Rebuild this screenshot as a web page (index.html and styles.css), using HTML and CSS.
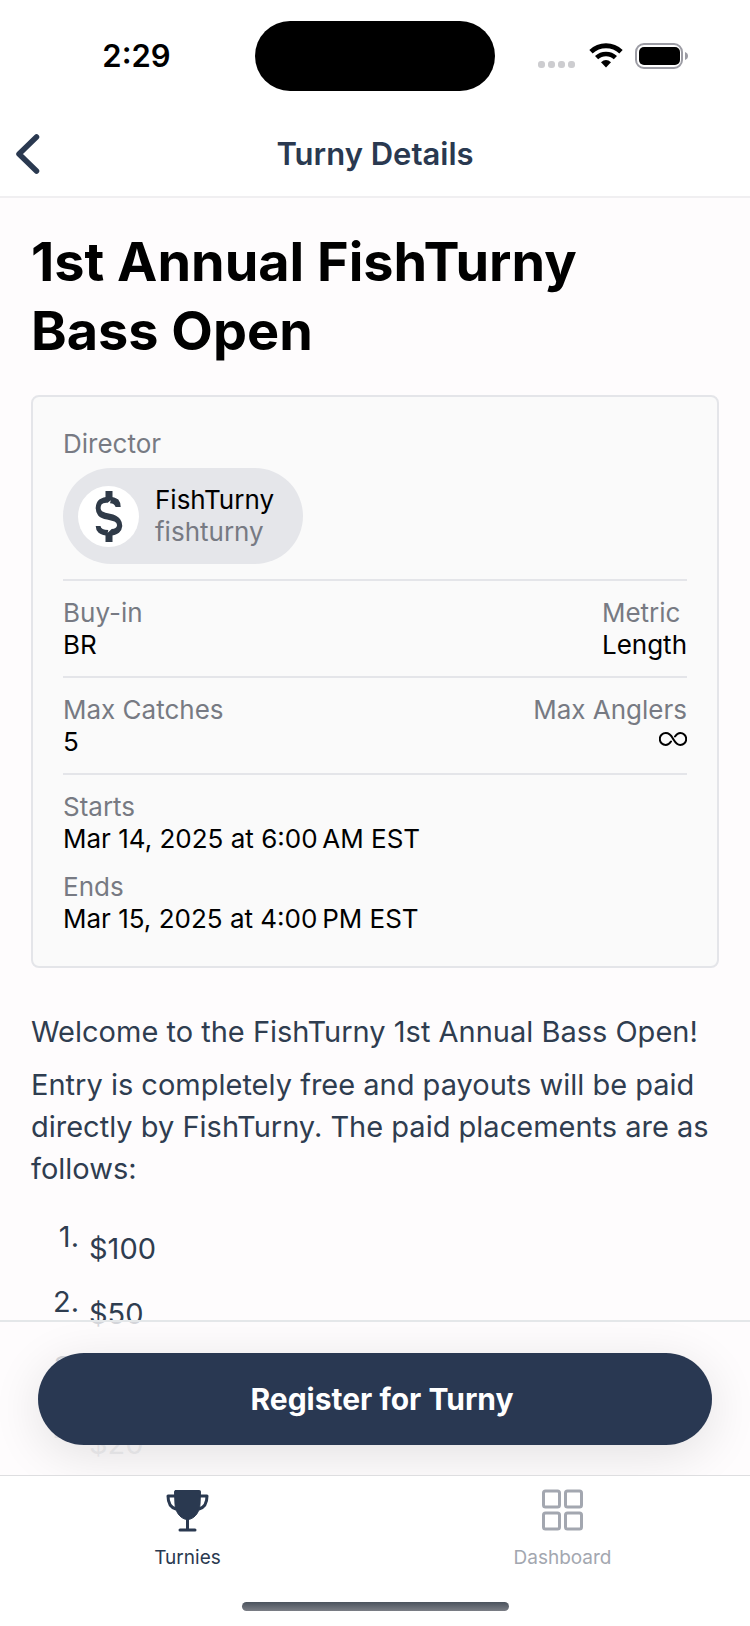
FILE: index.html
```html
<!DOCTYPE html>
<html lang="en">
<head>
<meta charset="utf-8">
<meta name="viewport" content="width=device-width, initial-scale=1">
<title>Turny Details</title>
<link rel="stylesheet" href="styles.css">
</head>
<body>
<div class="app">
  <div class="status-bar">
    <time class="clock">2:29</time>
    <div class="island"></div>
    <div class="status-icons">
      <svg class="signal" width="40" height="8" viewBox="0 0 40 8" fill="#cdcdd0" aria-hidden="true">
        <rect x="1" y="0" width="7" height="7" rx="3"/><rect x="11" y="0" width="7" height="7" rx="3"/><rect x="21" y="0" width="7" height="7" rx="3"/><rect x="31" y="0" width="7" height="7" rx="3"/>
      </svg>
      <svg width="34" height="26" viewBox="0 0 34 26" fill="none" stroke="#000" aria-hidden="true">
        <path d="M2 8.800a21.600 21.600 0 0 1 30 0" stroke-width="4.800"/>
        <path d="M7.600 14.700a13.600 13.600 0 0 1 18.800 0" stroke-width="4.600"/>
        <path d="M17 24.500l-5-5.200q5-4.400 10 0z" fill="#000" stroke="none"/>
      </svg>
      <svg width="54" height="26" viewBox="0 0 54 26" aria-hidden="true">
        <rect x="1" y="1" width="46" height="24" rx="8" fill="none" stroke="#9c9ca4" stroke-width="2"/>
        <rect x="4" y="4" width="41" height="18" rx="5"/>
        <path d="M50 9q3 1.200 3 4t-3 4z" fill="#9c9ca4"/>
      </svg>
    </div>
  </div>

  <header class="nav-bar">
    <button class="back" type="button" aria-label="Back">
      <svg width="26" height="42" viewBox="0 0 26 42" fill="none" stroke="#2a3950" stroke-width="5.500" stroke-linecap="round" stroke-linejoin="round"><path d="M21.500 4L4 21l17.500 17"/></svg>
    </button>
    <h2 class="nav-title">Turny Details</h2>
  </header>

  <main class="content">
    <h1 class="title">1st Annual FishTurny Bass Open</h1>

    <section class="card">
      <div class="group">
        <div class="label">Director</div>
        <a class="director" href="#fishturny">
          <svg class="avatar" width="61" height="61" viewBox="0 0 61 61" aria-hidden="true">
            <circle cx="30.500" cy="30.500" r="30.500" fill="#fff"/>
            <g fill="#2f3a48">
              <path d="M27.500 5h7v8h-7zM27.500 47h7v9h-7z"/>
              <path d="M42.700 21H37.600Q36.500 17.600 32 17.300L32.800 14.300 29.700 16.700Q25 16.300 23.500 18.600Q21.500 23 24 25.300Q27 27 32 27.800Q39 29 42 33Q44.300 36 44.300 40Q43.800 44.500 41 46.800Q37 49.800 31 49.800Q24.500 49.800 20.600 46.800Q17.700 44 17.700 40H22.500Q23 43.800 30.300 44L29.700 46.700 33.700 43Q38.500 42.600 39 39.500Q39.300 37 36.500 35.500Q33 34.300 29 33.500Q23 32.500 20.200 29.500Q17.600 26 17.700 21.700Q18 16.500 21.300 13.600Q25 10.700 31 10.700Q36.800 10.700 40.300 13.600Q42.700 16.500 42.700 21z"/>
            </g>
          </svg>
          <span class="names"><span>FishTurny</span><span class="muted">fishturny</span></span>
        </a>
      </div>
      <div class="group pair">
        <div><div class="label">Buy-in</div><div>BR</div></div>
        <div><div class="label">Metric</div><div>Length</div></div>
      </div>
      <div class="group pair">
        <div><div class="label">Max Catches</div><div>5</div></div>
        <div class="end"><div class="label">Max Anglers</div>
          <div class="unlimited"><svg width="28" height="14" viewBox="0 0 28 14" fill="none" stroke="#000" stroke-width="2" stroke-linecap="round" role="img" aria-label="Unlimited"><path d="M12 9.500C10.600 11.500 9 13 6.800 13a6 6 0 0 1 0-12C11.500 1 13 5 14.500 7.500S18 13 21.200 13a6 6 0 0 0 0-12C19 1 17.400 2.500 16 4.500"/></svg></div>
        </div>
      </div>
      <div class="group dates">
        <div><div class="label">Starts</div><div>Mar 14, 2025 at 6:00&#8239;AM EST</div></div>
        <div><div class="label">Ends</div><div>Mar 15, 2025 at 4:00&#8239;PM EST</div></div>
      </div>
    </section>

    <article class="description">
      <p>Welcome to the FishTurny 1st Annual Bass Open!</p>
      <p>Entry is completely free and payouts will be paid directly by FishTurny. The paid placements are as follows:</p>
      <ol class="prizes">
        <li><span>$100</span></li>
        <li><span>$50</span></li>
        <li><span></span></li>
        <li><span>$20</span></li>
      </ol>
    </article>

    <div class="action-bar">
      <button class="register" type="button">Register for Turny</button>
    </div>
  </main>

  <nav class="tab-bar">
    <a class="tab active" href="#turnies">
      <svg width="44" height="44" viewBox="0 0 44 44" fill="none" stroke="#2a3950" stroke-width="3" stroke-linecap="round" stroke-linejoin="round" aria-hidden="true">
        <path d="M9.500 1.500h24q1 0 1 1l-.5 13C33.500 24 27.500 30.500 21.500 30.500S9.500 24 9 15.500L8.500 2.500q0-1 1-1z" fill="#2a3950" stroke-width="1"/>
        <path d="M8.500 7H2C2 14 4.500 18.500 10 20M34.500 7h6.500C41 14 38.500 18.500 33 20M21.500 30v11M14 41h15"/>
      </svg>
      <span>Turnies</span>
    </a>
    <a class="tab" href="#dashboard">
      <svg width="44" height="44" viewBox="0 0 44 44" fill="none" stroke="#a3a7b0" stroke-width="3" aria-hidden="true">
        <rect x="2.500" y="2" width="16" height="16" rx="2"/><rect x="24.500" y="2" width="16" height="16" rx="2"/><rect x="2.500" y="24" width="16" height="16" rx="2"/><rect x="24.500" y="24" width="16" height="16" rx="2"/>
      </svg>
      <span>Dashboard</span>
    </a>
  </nav>
  <div class="home"><div class="home-indicator"></div></div>
</div>
</body>
</html>
```
FILE: styles.css
```css
* { box-sizing: border-box; }
body { margin: 0; background: #fff; color: #000; font-family: Inter, "Liberation Sans", sans-serif; font-size: 26px; line-height: 32px; }
h1, h2, p, ol { margin: 0; padding: 0; }
button { border: 0; font: inherit; cursor: pointer; }
a { color: inherit; text-decoration: none; }
svg { display: block; flex: none; }
.app { display: flex; flex-direction: column; height: 100vh; overflow: hidden; }

.status-bar { display: grid; grid-template-columns: 1fr 240px 1fr; align-items: center; height: 112px; flex: none; }
.clock { justify-self: center; padding-left: 18px; font-size: 31px; font-weight: 600; }
.island { height: 70px; border-radius: 35px; background: #000; }
.status-icons { display: flex; align-items: center; justify-content: flex-end; gap: 12px; padding-right: 61px; }
.signal { align-self: flex-end; }

.nav-bar { display: grid; grid-template-columns: 64px 1fr 64px; align-items: center; height: 86px; flex: none; border-bottom: 2px solid #f0eff1; }
.back { display: flex; padding: 0 0 0 15px; background: none; }
.nav-title { font-size: 31px; line-height: 40px; font-weight: 600; text-align: center; color: #2a3950; }

.content { position: relative; flex: 1; min-height: 0; overflow: hidden; padding: 29px 31px; background: #fefcfd; }
.title { padding-right: 48px; font-size: 54px; line-height: 69px; font-weight: 700; }
.card { margin-top: 30px; padding: 31px 30px; border: 2px solid #e4e5e9; border-radius: 8px; background: #fafafa; }
.group { padding: 16px 0 15px; border-bottom: 2px solid #e4e5e9; }
.group:first-child { padding-top: 0; }
.group:last-child { padding-bottom: 0; border-bottom: 0; }
.label, .muted { color: #777a83; }
.pair { display: flex; justify-content: space-between; }
.end { text-align: right; }
.unlimited { display: flex; justify-content: flex-end; padding-top: 6px; }
.dates { display: grid; gap: 16px; }
.director { display: inline-flex; align-items: center; gap: 16px; height: 96px; margin-top: 8px; padding: 0 29px 0 15px; border-radius: 48px; background: #e5e6ea; vertical-align: top; }
.names { display: grid; }

.description { margin-top: 43px; font-size: 29px; line-height: 42px; color: #2f3d50; }
.description p + p { margin-top: 11px; }
.prizes { display: grid; gap: 11px; margin-top: 26px; list-style: none; counter-reset: place; }
.prizes li { display: grid; grid-template-columns: 48px 1fr; gap: 10px; height: 54px; counter-increment: place; }
.prizes li::before { content: counter(place) "."; text-align: right; }
.prizes span { padding-top: 12px; }

.action-bar { position: absolute; left: 0; right: 0; bottom: 0; padding: 31px 38px 30px; border-top: 2px solid #e4e7e9; background: linear-gradient(rgba(254, 252, 253, .8) 59%, rgba(254, 252, 253, .93) 59%); overflow: hidden; }
.register { display: block; width: 100%; height: 92px; padding: 0 0 0 14px; border-radius: 46px; background: #293852; color: #fff; font-size: 30px; font-weight: 700; box-shadow: 0 10px 50px rgba(0, 0, 0, .11); }

.tab-bar { display: flex; flex: none; padding-top: 13px; border-top: 1px solid #dedee0; background: #fff; }
.tab { display: flex; flex: 1; flex-direction: column; align-items: center; gap: 13px; font-size: 19px; line-height: 24px; color: #a3a7b0; }
.active { color: #2a3950; }
.home { display: flex; justify-content: center; flex: none; padding: 32px 0 15px; background: #fff; }
.home-indicator { width: 267px; height: 9px; border-radius: 5px; background: linear-gradient(#4b535d, #7b7e86); }
```
